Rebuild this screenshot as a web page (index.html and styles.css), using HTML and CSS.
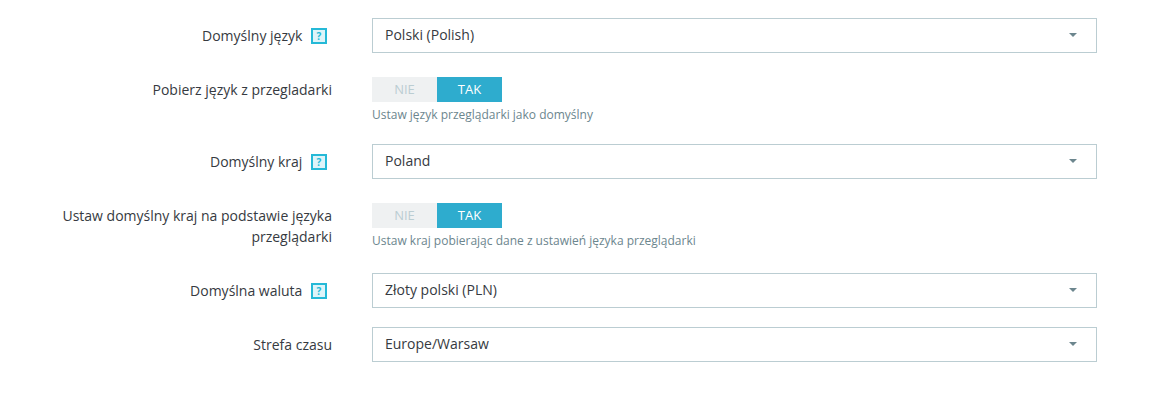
FILE: index.html
```
<!DOCTYPE html>
<html lang="pl">
<head>
    <meta charset="UTF-8">
    <meta name="viewport" content="width=device-width, initial-scale=1.0">
    <title>Lokalizacja</title>
    <link rel="stylesheet" href="styles.css">
</head>
<body>
    <form class="settings">
        <div class="row">
            <div class="row-label">
                <label for="language">Domyślny język</label>
                <button type="button" class="help">?</button>
            </div>
            <div class="select-box">
                <select id="language"><option>Polski (Polish)</option></select>
            </div>
        </div>

        <div class="row">
            <div class="row-label" id="detect-language">Pobierz język z przegladarki</div>
            <div>
                <div class="switch" role="radiogroup" aria-labelledby="detect-language">
                    <input type="radio" name="detect_language" id="language-no">
                    <label for="language-no">NIE</label>
                    <input type="radio" name="detect_language" id="language-yes" checked>
                    <label for="language-yes">TAK</label>
                </div>
                <p class="hint">Ustaw język przeglądarki jako domyślny</p>
            </div>
        </div>

        <div class="row">
            <div class="row-label">
                <label for="country">Domyślny kraj</label>
                <button type="button" class="help">?</button>
            </div>
            <div class="select-box">
                <select id="country"><option>Poland</option></select>
            </div>
        </div>

        <div class="row">
            <div class="row-label" id="detect-country">Ustaw domyślny kraj na podstawie języka przeglądarki</div>
            <div>
                <div class="switch" role="radiogroup" aria-labelledby="detect-country">
                    <input type="radio" name="detect_country" id="country-no">
                    <label for="country-no">NIE</label>
                    <input type="radio" name="detect_country" id="country-yes" checked>
                    <label for="country-yes">TAK</label>
                </div>
                <p class="hint">Ustaw kraj pobierając dane z ustawień języka przeglądarki</p>
            </div>
        </div>

        <div class="row">
            <div class="row-label">
                <label for="currency">Domyślna waluta</label>
                <button type="button" class="help">?</button>
            </div>
            <div class="select-box">
                <select id="currency"><option>Złoty polski (PLN)</option></select>
            </div>
        </div>

        <div class="row">
            <div class="row-label">
                <label for="timezone">Strefa czasu</label>
            </div>
            <div class="select-box">
                <select id="timezone"><option>Europe/Warsaw</option></select>
            </div>
        </div>
    </form>
</body>
</html>
```

FILE: styles.css
```
* {
    box-sizing: border-box;
}
body {
    margin: 0;
    background: #fff;
    color: #363a41;
    font-family: "Open Sans", sans-serif;
    font-size: 14px;
    line-height: 21px;
}
.settings {
    display: flex;
    flex-direction: column;
    gap: 19px;
    padding: 18px 61px 18px 32px;
}
.row {
    display: grid;
    grid-template-columns: 300px 1fr;
    column-gap: 40px;
    align-items: start;
}
.row-label {
    padding: 7px 0;
    text-align: right;
}
.help {
    width: 16px;
    height: 16px;
    margin: 0 5px;
    padding: 0;
    border: 2px solid #25b9d7;
    background: #def4f9;
    color: #25b9d7;
    font-family: "Open Sans", sans-serif;
    font-size: 10px;
    font-weight: bold;
    line-height: 12px;
    text-align: center;
    vertical-align: 1px;
    cursor: pointer;
}
.select-box {
    position: relative;
}
.select-box select {
    display: block;
    width: 100%;
    height: 35px;
    padding: 0 32px 2px 12px;
    border: 1px solid #bbcdd2;
    border-radius: 0;
    background: #fff;
    color: #363a41;
    font-family: inherit;
    font-size: 14px;
    appearance: none;
}
.select-box::after {
    content: "";
    position: absolute;
    top: 15px;
    right: 20px;
    border: 4px solid transparent;
    border-top-color: #6c868e;
    border-bottom: 0;
    pointer-events: none;
}
.switch {
    display: flex;
    margin-top: 5px;
}
.switch input {
    position: absolute;
    opacity: 0;
}
.switch label {
    width: 65px;
    background: #eff1f2;
    color: #bbcdd2;
    font-size: 13px;
    font-weight: 500;
    line-height: 25px;
    text-align: center;
    cursor: pointer;
}
.switch input:checked + label {
    background: #2eacce;
    color: #fff;
}
.hint {
    margin: 4px 0 0;
    padding-bottom: 1px;
    color: #6c868e;
    font-size: 12px;
    line-height: 18px;
}
```
